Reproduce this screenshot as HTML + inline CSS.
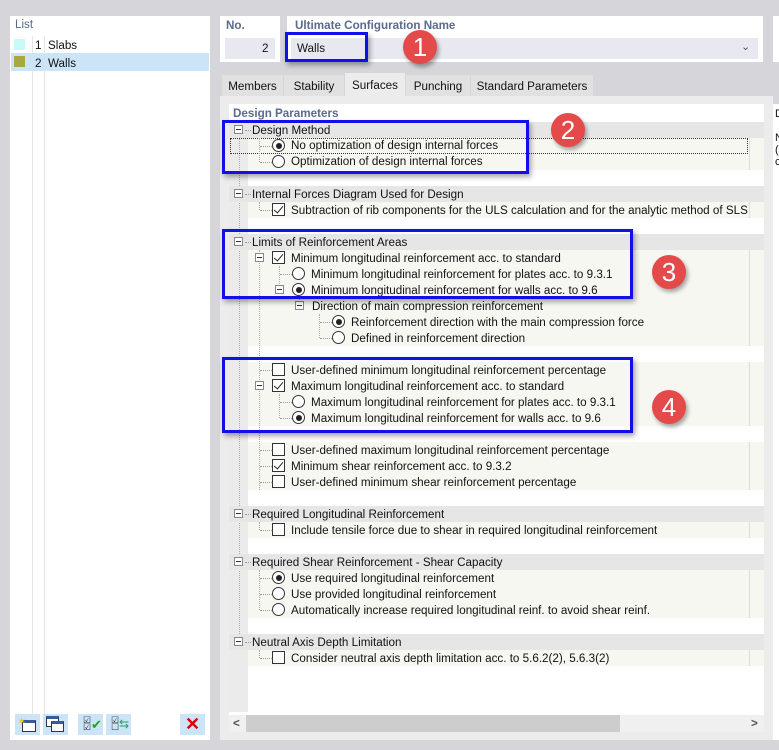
<!DOCTYPE html>
<html><head><meta charset="utf-8"><style>
*{margin:0;padding:0;box-sizing:border-box}
body{width:779px;height:750px;background:#d5d5da;position:relative;overflow:hidden;font-family:"Liberation Sans",sans-serif;font-size:11.65px;color:#111}
.a{position:absolute}
.t{position:absolute;white-space:nowrap;line-height:16px;height:16px;padding-top:1px}
.r{position:absolute;left:248px;width:516px;height:16px;background:#f7f7f2}
.r:after{content:"";position:absolute;left:501px;top:0;width:1px;height:16px;background:#ddd}
.h{position:absolute;left:229px;width:535px;height:16px;background:#e6e6e6}
.cb{position:absolute;width:13px;height:13px;border:1px solid #333;background:#fff}
.cb.c:after{content:"";position:absolute;left:3px;top:0px;width:4px;height:8px;border:solid #222;border-width:0 1.5px 1.5px 0;transform:rotate(40deg)}
.rd{position:absolute;width:13px;height:13px;border:1px solid #333;border-radius:50%;background:#fff}
.rd.c:after{content:"";position:absolute;left:2.5px;top:2.5px;width:6px;height:6px;border-radius:50%;background:#222}
.mn{position:absolute;width:9px;height:9px;border:1px solid #888;background:#fff}
.mn:after{content:"";position:absolute;left:1px;top:3px;width:5px;height:1px;background:#333}
.dh{position:absolute;height:1px;border-top:1px dotted #999}
.dv{position:absolute;width:1px;border-left:1px dotted #aaa}
.bx{position:absolute;border:3px solid #1010e8;box-shadow:2px 3px 5px rgba(0,0,0,.35)}
.n{position:absolute;width:34px;height:34px;border-radius:50%;background:#e44a4a;color:#fff;font-size:26px;text-align:center;line-height:34px;box-shadow:2px 3px 4px rgba(0,0,0,.35)}
.tab{position:absolute;top:75px;height:21px;background:#e1e1e1;line-height:23px;text-align:center;font-size:11.65px}
.btn{position:absolute;top:714px;width:25px;height:21px;background:#cce4f7}
</style></head><body>
<div class="a" style="left:10px;top:16px;width:200px;height:724px;background:#fff"></div>
<div class="t" style="left:15px;top:16px;color:#5a6b8c">List</div>
<div class="a" style="left:32px;top:36px;width:1px;height:686px;background:#e6e6e6"></div>
<div class="a" style="left:44px;top:36px;width:1px;height:686px;background:#e6e6e6"></div>
<div class="a" style="left:11px;top:53px;width:198px;height:18px;background:#cce4f7"></div>
<div class="a" style="left:14px;top:39px;width:11px;height:11px;background:#c8fafa"></div>
<div class="a" style="left:14px;top:56px;width:11px;height:11px;background:#a9a840"></div>
<div class="t" style="left:35px;top:37px">1</div><div class="t" style="left:48px;top:37px">Slabs</div>
<div class="t" style="left:35px;top:55px">2</div><div class="t" style="left:48px;top:55px">Walls</div>
<div class="btn" style="left:15px"><div class="a" style="left:7px;top:6px;width:14px;height:12px;border:1px solid #334;background:#fff;border-top:3px solid #3a5a9a"></div><div class="a" style="left:2px;top:1px;color:#e8d000;font-size:11px">✶</div></div>
<div class="btn" style="left:43px"><div class="a" style="left:3px;top:2px;width:13px;height:11px;border:1px solid #334;background:#fff;border-top:3px solid #3a5a9a"></div><div class="a" style="left:8px;top:7px;width:13px;height:11px;border:1px solid #334;background:#fff;border-top:3px solid #3a5a9a"></div></div>
<div class="btn" style="left:78px"><div class="a" style="left:5px;top:3px;font-size:9px;line-height:7px;color:#333">☑<br>☑</div><div class="a" style="left:13px;top:3px;color:#20a020;font-size:13px">✔</div></div>
<div class="btn" style="left:106px"><div class="a" style="left:5px;top:3px;font-size:9px;line-height:7px;color:#333">☑<br>☐</div><div class="a" style="left:13px;top:3px;color:#20a060;font-size:12px">⇆</div></div>
<div class="btn" style="left:180px;color:#e00000;font-size:18px;font-weight:bold;text-align:center;line-height:21px">✕</div>
<div class="a" style="left:220px;top:16px;width:60px;height:46px;background:#fff"></div>
<div class="t" style="left:226px;top:17px;color:#5a6b8c;font-weight:bold">No.</div>
<div class="a" style="left:225px;top:38px;width:50px;height:21px;background:#e8e8f0"></div>
<div class="t" style="left:262px;top:40px">2</div>
<div class="a" style="left:287px;top:16px;width:476px;height:46px;background:#fff"></div>
<div class="t" style="left:295px;top:17px;color:#5a6b8c;font-weight:bold">Ultimate Configuration Name</div>
<div class="a" style="left:291px;top:38px;width:467px;height:21px;background:#e8e8f0"></div>
<div class="t" style="left:297px;top:40px">Walls</div>
<div class="t" style="left:741px;top:38px;color:#555;font-size:11px">&#8964;</div>
<div class="a" style="left:773px;top:16px;width:6px;height:46px;background:#fff"></div>
<div class="tab" style="left:222px;width:61px">Members</div>
<div class="tab" style="left:284px;width:60px">Stability</div>
<div class="tab" style="left:345px;top:73px;height:23px;width:60px;background:#ececec;line-height:26px">Surfaces</div>
<div class="tab" style="left:406px;width:64px">Punching</div>
<div class="tab" style="left:471px;width:122px">Standard Parameters</div>
<div class="a" style="left:220px;top:96px;width:553px;height:644px;background:#ececec"></div>
<div class="a" style="left:229px;top:104px;width:535px;height:611px;background:#fff"></div>
<div class="a" style="left:773px;top:104px;width:6px;height:636px;background:#fff"></div>
<div class="t" style="left:775px;top:105px;font-size:11px">D</div>
<div class="t" style="left:775px;top:129px;font-size:11px">N</div>
<div class="t" style="left:775px;top:141px;font-size:11px">(</div>
<div class="t" style="left:775px;top:153px;font-size:11px">c</div>
<div class="t" style="left:233px;top:105px;color:#5a6b8c;font-weight:bold">Design Parameters</div>
<div class="a" style="left:229px;top:122px;width:19px;height:590px;background:#ebebeb"></div>
<div class="dv" style="left:239px;top:130px;height:520px"></div>
<div class="h" style="top:122px"></div>
<div class="r" style="top:138px"></div><div class="r" style="top:154px"></div>
<div class="a" style="left:230px;top:138px;width:518px;height:16px;border:1px dotted #333"></div>
<div class="h" style="top:186px"></div><div class="r" style="top:202px"></div>
<div class="h" style="top:234px"></div>
<div class="r" style="top:250px"></div><div class="r" style="top:266px"></div><div class="r" style="top:282px"></div><div class="r" style="top:298px"></div><div class="r" style="top:314px"></div><div class="r" style="top:330px"></div>
<div class="r" style="top:362px"></div><div class="r" style="top:378px"></div><div class="r" style="top:394px"></div><div class="r" style="top:410px"></div>
<div class="r" style="top:442px"></div><div class="r" style="top:458px"></div><div class="r" style="top:474px"></div>
<div class="h" style="top:506px"></div><div class="r" style="top:522px"></div>
<div class="h" style="top:554px"></div><div class="r" style="top:570px"></div><div class="r" style="top:586px"></div><div class="r" style="top:602px"></div>
<div class="h" style="top:634px"></div><div class="r" style="top:650px"></div>
<div class="dv" style="left:259px;top:138px;height:24px"></div>
<div class="dv" style="left:259px;top:202px;height:8px"></div>
<div class="dv" style="left:259px;top:250px;height:240px"></div>
<div class="dv" style="left:279px;top:266px;height:24px"></div>
<div class="dv" style="left:299px;top:298px;height:8px"></div>
<div class="dv" style="left:319px;top:314px;height:24px"></div>
<div class="dv" style="left:279px;top:394px;height:24px"></div>
<div class="dv" style="left:259px;top:522px;height:8px"></div>
<div class="dv" style="left:259px;top:570px;height:40px"></div>
<div class="dv" style="left:259px;top:650px;height:8px"></div>
<div class="dh" style="left:245px;top:130px;width:6px"></div><div class="dh" style="left:245px;top:194px;width:6px"></div><div class="dh" style="left:245px;top:242px;width:6px"></div><div class="dh" style="left:245px;top:514px;width:6px"></div><div class="dh" style="left:245px;top:562px;width:6px"></div><div class="dh" style="left:245px;top:642px;width:6px"></div>
<div class="dh" style="left:260px;top:146px;width:12px"></div><div class="dh" style="left:260px;top:162px;width:12px"></div><div class="dh" style="left:260px;top:210px;width:12px"></div>
<div class="dh" style="left:280px;top:274px;width:12px"></div><div class="dh" style="left:320px;top:322px;width:12px"></div><div class="dh" style="left:320px;top:338px;width:12px"></div>
<div class="dh" style="left:260px;top:370px;width:12px"></div><div class="dh" style="left:280px;top:402px;width:12px"></div><div class="dh" style="left:280px;top:418px;width:12px"></div>
<div class="dh" style="left:260px;top:450px;width:12px"></div><div class="dh" style="left:260px;top:466px;width:12px"></div><div class="dh" style="left:260px;top:482px;width:12px"></div>
<div class="dh" style="left:260px;top:530px;width:12px"></div><div class="dh" style="left:260px;top:578px;width:12px"></div><div class="dh" style="left:260px;top:594px;width:12px"></div><div class="dh" style="left:260px;top:610px;width:12px"></div><div class="dh" style="left:260px;top:658px;width:12px"></div>
<div class="mn" style="left:234px;top:125px"></div><div class="mn" style="left:234px;top:189px"></div><div class="mn" style="left:234px;top:237px"></div><div class="mn" style="left:234px;top:509px"></div><div class="mn" style="left:234px;top:557px"></div><div class="mn" style="left:234px;top:637px"></div>
<div class="mn" style="left:255px;top:253px"></div><div class="mn" style="left:275px;top:285px"></div><div class="mn" style="left:295px;top:301px"></div><div class="mn" style="left:255px;top:381px"></div>
<div class="rd c" style="left:272px;top:139px"></div><div class="rd" style="left:272px;top:155px"></div>
<div class="cb c" style="left:272px;top:203px"></div>
<div class="cb c" style="left:272px;top:251px"></div>
<div class="rd" style="left:292px;top:267px"></div><div class="rd c" style="left:292px;top:283px"></div>
<div class="rd c" style="left:332px;top:315px"></div><div class="rd" style="left:332px;top:331px"></div>
<div class="cb" style="left:272px;top:363px"></div><div class="cb c" style="left:272px;top:379px"></div>
<div class="rd" style="left:292px;top:395px"></div><div class="rd c" style="left:292px;top:411px"></div>
<div class="cb" style="left:272px;top:443px"></div><div class="cb c" style="left:272px;top:459px"></div><div class="cb" style="left:272px;top:475px"></div>
<div class="cb" style="left:272px;top:523px"></div>
<div class="rd c" style="left:272px;top:571px"></div><div class="rd" style="left:272px;top:587px"></div><div class="rd" style="left:272px;top:603px"></div>
<div class="cb" style="left:272px;top:651px"></div>
<div class="t" style="left:252px;top:122px">Design Method</div>
<div class="t" style="left:291px;top:137px">No optimization of design internal forces</div>
<div class="t" style="left:291px;top:153px">Optimization of design internal forces</div>
<div class="t" style="left:252px;top:186px">Internal Forces Diagram Used for Design</div>
<div class="t" style="left:291px;top:202px">Subtraction of rib components for the ULS calculation and for the analytic method of SLS</div>
<div class="t" style="left:252px;top:234px">Limits of Reinforcement Areas</div>
<div class="t" style="left:291px;top:250px">Minimum longitudinal reinforcement acc. to standard</div>
<div class="t" style="left:311px;top:266px">Minimum longitudinal reinforcement for plates acc. to 9.3.1</div>
<div class="t" style="left:311px;top:282px">Minimum longitudinal reinforcement for walls acc. to 9.6</div>
<div class="t" style="left:312px;top:298px">Direction of main compression reinforcement</div>
<div class="t" style="left:351px;top:314px">Reinforcement direction with the main compression force</div>
<div class="t" style="left:351px;top:330px">Defined in reinforcement direction</div>
<div class="t" style="left:291px;top:362px">User-defined minimum longitudinal reinforcement percentage</div>
<div class="t" style="left:291px;top:378px">Maximum longitudinal reinforcement acc. to standard</div>
<div class="t" style="left:311px;top:394px">Maximum longitudinal reinforcement for plates acc. to 9.3.1</div>
<div class="t" style="left:311px;top:410px">Maximum longitudinal reinforcement for walls acc. to 9.6</div>
<div class="t" style="left:291px;top:442px">User-defined maximum longitudinal reinforcement percentage</div>
<div class="t" style="left:291px;top:458px">Minimum shear reinforcement acc. to 9.3.2</div>
<div class="t" style="left:291px;top:474px">User-defined minimum shear reinforcement percentage</div>
<div class="t" style="left:252px;top:506px">Required Longitudinal Reinforcement</div>
<div class="t" style="left:291px;top:522px">Include tensile force due to shear in required longitudinal reinforcement</div>
<div class="t" style="left:252px;top:554px">Required Shear Reinforcement - Shear Capacity</div>
<div class="t" style="left:291px;top:570px">Use required longitudinal reinforcement</div>
<div class="t" style="left:291px;top:586px">Use provided longitudinal reinforcement</div>
<div class="t" style="left:291px;top:602px">Automatically increase required longitudinal reinf. to avoid shear reinf.</div>
<div class="t" style="left:252px;top:634px">Neutral Axis Depth Limitation</div>
<div class="t" style="left:291px;top:650px">Consider neutral axis depth limitation acc. to 5.6.2(2), 5.6.3(2)</div>
<div class="a" style="left:229px;top:715px;width:535px;height:17px;background:#f0f0f0"></div>
<div class="a" style="left:246px;top:715px;width:374px;height:17px;background:#cdcdcd"></div>
<div class="t" style="left:233px;top:715px;color:#555;font-weight:bold">&lt;</div>
<div class="t" style="left:751px;top:715px;color:#555;font-weight:bold">&gt;</div>
<div class="bx" style="left:285px;top:32px;width:83px;height:30px"></div>
<div class="bx" style="left:222px;top:120px;width:307px;height:54px"></div>
<div class="bx" style="left:222px;top:229px;width:411px;height:70px"></div>
<div class="bx" style="left:222px;top:357px;width:411px;height:76px"></div>
<div class="n" style="left:403px;top:30px">1</div>
<div class="n" style="left:551px;top:113px">2</div>
<div class="n" style="left:652px;top:255px">3</div>
<div class="n" style="left:652px;top:390px">4</div>
</body></html>
